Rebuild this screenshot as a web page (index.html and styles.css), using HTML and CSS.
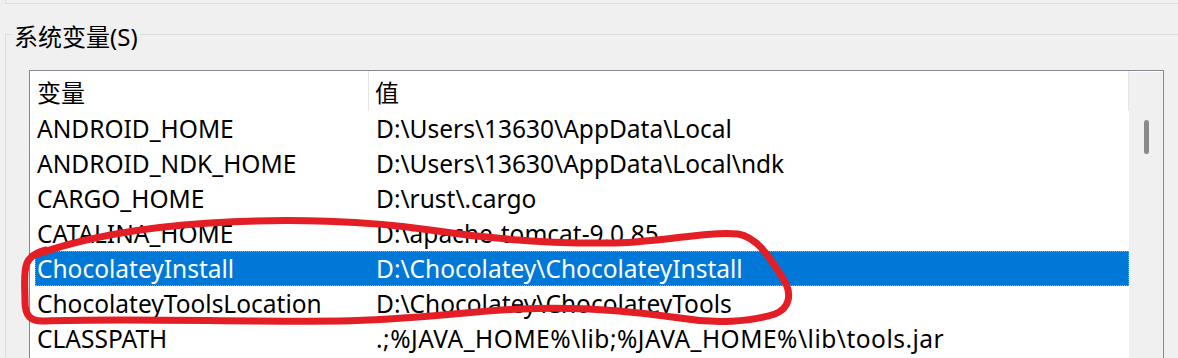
FILE: index.html
```html
<!DOCTYPE html>
<html lang="zh-CN">
<head>
  <meta charset="UTF-8">
  <title>环境变量</title>
  <link rel="stylesheet" href="styles.css">
</head>
<body>
  <!-- 用户变量 (only the bottom edge is visible) -->
  <div class="user-group"></div>

  <!-- 系统变量 -->
  <fieldset class="sys-group">
    <legend>系统变量(S)</legend>
    <div class="listbox">
      <div class="list">
        <div class="list-head">
          <div class="hcell first">变量</div>
          <div class="hcell second">值</div>
        </div>
        <div class="row"><span class="name">ANDROID_HOME</span><span class="value">D:\Users\13630\AppData\Local</span></div>
        <div class="row"><span class="name">ANDROID_NDK_HOME</span><span class="value">D:\Users\13630\AppData\Local\ndk</span></div>
        <div class="row"><span class="name">CARGO_HOME</span><span class="value">D:\rust\.cargo</span></div>
        <div class="row"><span class="name">CATALINA_HOME</span><span class="value">D:\apache-tomcat-9.0.85</span></div>
        <div class="row selected"><span class="name">ChocolateyInstall</span><span class="value">D:\Chocolatey\ChocolateyInstall</span></div>
        <div class="row"><span class="name">ChocolateyToolsLocation</span><span class="value">D:\Chocolatey\ChocolateyTools</span></div>
        <div class="row"><span class="name">CLASSPATH</span><span class="value wide">.;%JAVA_HOME%\lib;%JAVA_HOME%\lib\tools.jar</span></div>
      </div>
      <div class="vscroll"><div class="thumb"></div></div>
    </div>
  </fieldset>

  <!-- hand-drawn red circle over the two Chocolatey rows -->
  <svg class="markup" width="1178" height="358" viewBox="0 0 1178 358">
    <path d="M32 256 C70 242, 130 228, 210 223 C290 218, 370 221, 430 230 C490 239, 550 244, 615 243 C665 242, 705 231, 738 234 C760 238, 772 262, 784 280 C792 294, 790 308, 775 314 C750 322, 715 324, 680 318 C640 312, 580 306, 520 309 C460 312, 410 320, 340 321 C240 322, 120 318, 45 321 C30 322, 25 315, 25 302 C25 288, 23 272, 27 263 C30 256, 38 252, 46 250"
      fill="none" stroke="#e31e24" stroke-width="7" stroke-linecap="round" stroke-linejoin="round"/>
  </svg>
</body>
</html>
```

FILE: styles.css
```css
/* ---------- base ---------- */
* { box-sizing: border-box; }
html, body { margin: 0; padding: 0; width: 100%; height: 100%; overflow: hidden; }
body {
  background: #f0f0f0;
  font-family: "Noto Sans", "Noto Sans CJK SC", sans-serif;
  font-size: 24.5px;
  color: #000;
  position: relative;
}

/* upper group box, cut off by the window */
.user-group {
  margin-left: 5px;
  height: 4px;
  border-left: 1px solid #dcdcdc;
  border-bottom: 1px solid #dcdcdc;
}

/* ---------- system variables group ---------- */
.sys-group {
  margin: 12px -30px 0 5px;
  padding: 0;
  border: 1px solid #dcdcdc;
  border-right: none;
  min-width: 0;
}
.sys-group legend {
  margin-left: 6px;
  padding: 6px 2px 0;
  font-size: 24px;
  line-height: 30px;
}

/* ---------- list view ---------- */
.listbox {
  display: flex;
  width: 1135px;
  height: 400px;
  margin: 18px 0 0 23px;
  border: 1px solid #828790;
  background: #fff;
}
.list { flex: 1; padding-left: 5px; }
.list-head { display: flex; height: 40px; align-items: stretch; font-size: 24px; }
.hcell { display: flex; align-items: center; padding-left: 2px; }
.hcell.first { width: 334px; border-right: 1px solid #e5e5e5; }
.hcell.second { flex: 1; padding-left: 6px; border-right: 1px solid #e5e5e5; }

.row {
  display: grid;
  grid-template-columns: 339px 1fr;
  height: 35px;
  line-height: 33px;
  border: 1px solid transparent;
  white-space: nowrap;
}
.row .name { padding-left: 1px; }
.row .value { padding-left: 1px; }
.row .value.wide { letter-spacing: 0.5px; }
.row.selected {
  background: #0078d7;
  color: #fff;
  border: 1px dotted #f7931e;
}

/* scrollbar */
.vscroll {
  width: 34px;
  margin-top: 1px;
  background: #f0f0f0;
  padding-top: 48px;
}
.thumb {
  width: 5px;
  height: 34px;
  margin: 0 auto;
  border-radius: 3px;
  background: #8a8a8a;
}

/* red annotation */
.markup { position: absolute; top: 0; left: 0; pointer-events: none; }
```
